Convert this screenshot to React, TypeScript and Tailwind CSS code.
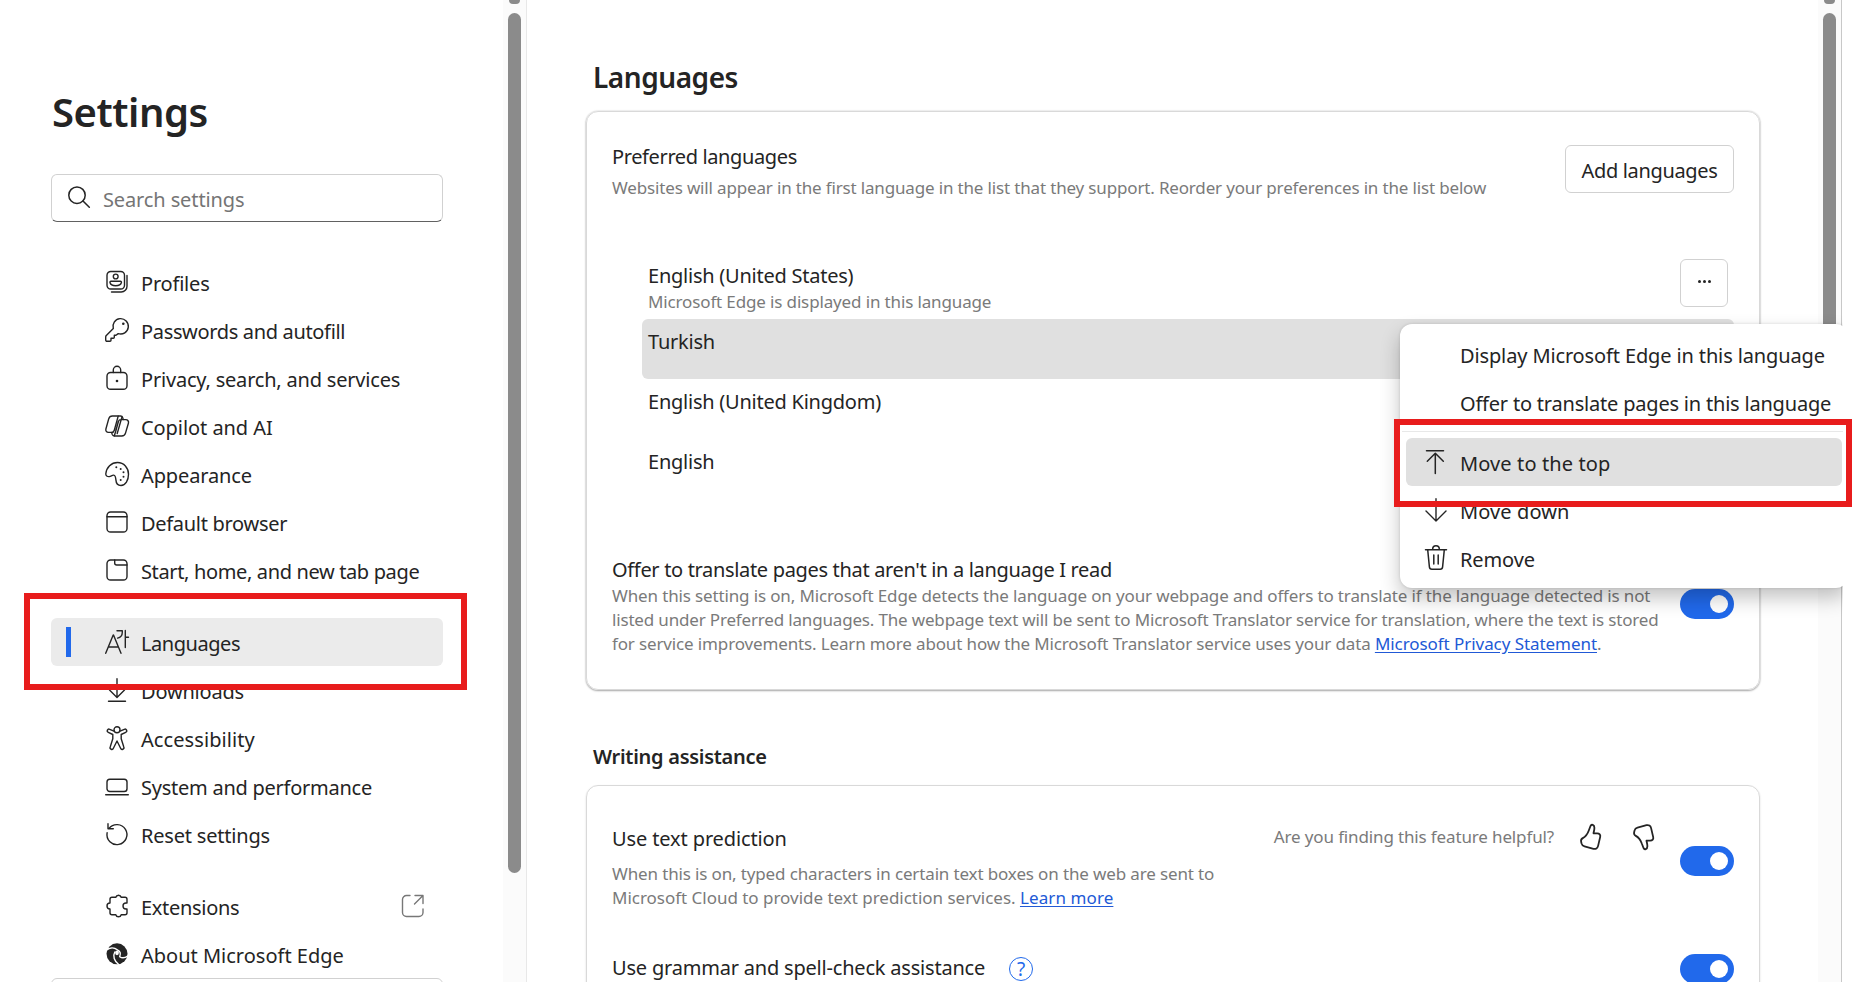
import type { ReactNode } from "react";
import clsx from "clsx";

type IconProps = { children: ReactNode; className?: string };

const Icon = ({ children, className }: IconProps) => (
  <svg
    viewBox="0 0 24 24"
    fill="none"
    stroke="currentColor"
    strokeWidth={1.4}
    strokeLinecap="round"
    strokeLinejoin="round"
    className={clsx("size-6 shrink-0 overflow-visible", className)}
  >
    {children}
  </svg>
);

const Dot = ({ x, y }: { x: number; y: number }) => (
  <circle cx={x} cy={y} r={1} fill="currentColor" stroke="none" />
);

const icons = {
  profiles: (
    <Icon>
      <rect x="2" y="1.5" width="17.5" height="17.5" rx="3.8" />
      <circle cx="10.7" cy="6.5" r="2.4" />
      <path d="M6 11.2h9.4c.8 0 1.2.6 1 1.3-.5 2-2.7 3.2-5.7 3.2s-5.200-1.200-5.700-3.200c-.2-.7.2-1.3 1-1.3Z" />
      <path d="M22 5.5v10.700c0 3.3-2.5 5.8-5.8 5.8H6.5" />
    </Icon>
  ),
  key: (
    <Icon>
      <path d="M13.2 15.600A7.700 7.700 0 1 0 8.300 10.600L1.300 17.600a2 2 0 0 0-.6 1.400V22a1.3 1.3 0 0 0 1.3 1.3H5a1 1 0 0 0 1-1V20.300H8.300a1 1 0 0 0 1-1V17.300H11Z" />
      <circle cx="18.3" cy="5.7" r="1.3" fill="currentColor" stroke="none" />
    </Icon>
  ),
  lock: (
    <Icon>
      <rect x="2" y="6.5" width="20" height="16.8" rx="3.6" />
      <path d="M8.3 6.500V4a3.7 3.7 0 0 1 7.400 0v2.500" />
      <circle cx="12" cy="15" r="1.3" fill="currentColor" stroke="none" />
    </Icon>
  ),
  copilot: (
    <Icon>
      <path d="M7.4 2h8.2c1 0 1.8.7 2.1 1.6l.6 2h2.500c1.9 0 3.2 1.8 2.6 3.6l-2.9 9.900c-.5 1.7-2 2.9-3.7 2.9H9.300c-1 0-1.8-.7-2.1-1.6l-.6-2H3.400C1.600 18.400.4 16.700.9 15L3.700 4.900C4.200 3.200 5.700 2 7.400 2Z" />
      <path d="M13.2 2.100 9.300 16.200c-.4 1.4-1.3 2.2-2.7 2.200M18.300 5.600h-2.500c-1.200 0-2 .7-2.400 1.900L10.500 18c-.4 1.3-.8 2.7-1.2 3.900M17 2.900 12.200 19.500" />
    </Icon>
  ),
  palette: (
    <Icon>
      <path d="M.8 11.800C1.400 5.500 6.300.5 12.500.5c6.400 0 11 5.200 11 11.800 0 6-3 11.200-7.500 11.200-3.500 0-4.900-2.500-5.100-5.600-.2-2.600-.4-4.600-2.200-4.800-1.600-.2-2.600 1.300-4.400 1.500-2 .2-3.700-1-3.500-2.800Z" />
      <Dot x={11.3} y={5.3} />
      <Dot x={15.7} y={7} />
      <Dot x={18.5} y={10.3} />
      <Dot x={18.5} y={14.7} />
      <Dot x={15.7} y={18} />
    </Icon>
  ),
  browser: (
    <Icon>
      <rect x="2" y="2" width="20" height="20" rx="3.6" />
      <path d="M2 6.700h20" />
    </Icon>
  ),
  tab: (
    <Icon>
      <rect x="2" y="2" width="20" height="20" rx="3.6" />
      <path d="M9.700 2v3c0 1.200.8 2 2 2H22" />
    </Icon>
  ),
  languages: (
    <Icon>
      <path d="M.7 23.300 8.200 5h.3L16 23.300M3.300 17h10M12 .8h5.300v1.400c0 3-1.500 5.100-4.700 5.900M20.300.5V17.500M20.300 7.200h3.200" />
    </Icon>
  ),
  download: (
    <Icon>
      <path d="M12 .7v18.600M4.500 12 12 19.500 19.500 12M3.500 23.300h17" />
    </Icon>
  ),
  accessibility: (
    <Icon>
      <circle cx="12" cy="3.8" r="3" />
      <path d="M9 5.200 4.700 3.300a1.7 1.7 0 0 0-1.400 3.100l4.500 2.100v4.300L5.200 21a1.7 1.7 0 0 0 3.2 1.300L12 15l3.600 7.300a1.7 1.7 0 0 0 3.2-1.300l-2.600-8.200V8.500l4.500-2.100a1.7 1.7 0 0 0-1.400-3.100L15 5.200" />
    </Icon>
  ),
  laptop: (
    <Icon>
      <rect x="2" y="5.3" width="20" height="12.2" rx="2.8" />
      <path d="M.7 20.700h22.600" />
    </Icon>
  ),
  reset: (
    <Icon>
      <path d="M2.100 10.800A10 10 0 1 0 4 6.500M3 1.700v5h5.300" />
    </Icon>
  ),
  puzzle: (
    <Icon>
      <path d="M10.800 3.300a2.800 2.800 0 0 1 5.400 0H20a2 2 0 0 1 2 2V9h-1a3 3 0 0 0 0 6h1v3.700a2 2 0 0 1-2 2h-3.800a2.800 2.800 0 0 1-5.400 0H7a2 2 0 0 1-2-2V15a3 3 0 0 1 0-6V5.300a2 2 0 0 1 2-2Z" />
    </Icon>
  ),
  edge: (
    <Icon>
      <circle cx="12" cy="11.8" r="10.5" fill="currentColor" stroke="none" />
      <path
        d="M1 8.600C4.500 5.400 9 5.300 12.300 7.800M9.800 10c-2.300 4-.6 9.300 3.900 12.500M12.300 7.800c3 1.200 3.700 3.800 2.400 6.900 2.300 1.600 5.300 1.200 8-.6"
        stroke="#fff"
        strokeWidth={1.4}
      />
      <ellipse cx="12" cy="10.8" rx="1.9" ry="2.4" fill="#fff" stroke="none" />
    </Icon>
  ),
};

type NavItem = {
  label: string;
  icon: ReactNode;
  tracking: string;
  active?: boolean;
  external?: boolean;
  spaced?: boolean;
};

const navItems: NavItem[] = [
  { label: "Profiles", icon: icons.profiles, tracking: "tracking-[-0.2px]" },
  { label: "Passwords and autofill", icon: icons.key, tracking: "tracking-[-0.34px]" },
  { label: "Privacy, search, and services", icon: icons.lock, tracking: "tracking-[-0.2px]" },
  { label: "Copilot and AI", icon: icons.copilot, tracking: "tracking-[-0.06px]" },
  { label: "Appearance", icon: icons.palette, tracking: "tracking-[-0.12px]" },
  { label: "Default browser", icon: icons.browser, tracking: "tracking-[-0.3px]" },
  { label: "Start, home, and new tab page", icon: icons.tab, tracking: "tracking-[-0.36px]" },
  { label: "Languages", icon: icons.languages, tracking: "tracking-[-0.45px]", active: true, spaced: true },
  { label: "Downloads", icon: icons.download, tracking: "tracking-[-0.2px]" },
  { label: "Accessibility", icon: icons.accessibility, tracking: "tracking-[0.08px]" },
  { label: "System and performance", icon: icons.laptop, tracking: "tracking-[-0.25px]" },
  { label: "Reset settings", icon: icons.reset, tracking: "tracking-[-0.2px]" },
  { label: "Extensions", icon: icons.puzzle, tracking: "tracking-[-0.3px]", external: true, spaced: true },
  { label: "About Microsoft Edge", icon: icons.edge, tracking: "tracking-normal" },
];

function Sidebar() {
  return (
    <aside className="w-[503px] shrink-0 pl-[51px] pt-[88px]">
      <h1 className="pl-px text-[40px] leading-[48px] font-semibold tracking-[-0.45px]">Settings</h1>

      <div className="mt-[38px] flex h-12 w-[392px] items-center rounded-md border border-[#d1d1d1] border-b-[#616161] pl-3.5">
        <Icon className="mb-0.5">
          <circle cx="11" cy="10.2" r="8.2" strokeWidth={1.5} />
          <path d="m17 16 6.300 6.300" strokeWidth={1.5} />
        </Icon>
        <span className="mt-1 ml-[13px] text-xl tracking-[-0.12px] text-[#757575]">Search settings</span>
      </div>

      <nav className="mt-9 w-[392px]">
        {navItems.map((item) => (
          <div
            key={item.label}
            className={clsx(
              "flex h-12 items-center rounded-md pr-[18px]",
              item.spaced && "mt-6",
              item.active && "bg-[#ebebeb]"
            )}
          >
            <span className={clsx("ml-[15px] h-[30px] w-[5px]", item.active && "bg-[#2169eb]")} />
            <span className="ml-[34px]">{item.icon}</span>
            <span className={clsx("mt-1 ml-3 text-xl whitespace-nowrap", item.tracking)}>{item.label}</span>
            {item.external && (
              <Icon className="ml-auto text-[#777]">
                <path d="M9 1.500H5.500a4 4 0 0 0-4 4v13a4 4 0 0 0 4 4H18a4 4 0 0 0 4-4V15M14 1.500h8v8M22 1.500 13.500 10" />
              </Icon>
            )}
          </div>
        ))}
      </nav>
      <div className="h-12 w-[392px] rounded-md border border-[#d1d1d1]" />
    </aside>
  );
}

function Scrollbar({ thumb, className }: { thumb: string; className: string }) {
  return (
    <div className={clsx("flex w-6 shrink-0 flex-col items-center border-r bg-[#fbfbfb]", className)}>
      <div className="h-1 w-[11px] rounded-b-sm bg-[#8b8b8b]" />
      <div className={clsx("mt-[9px] w-[13px] rounded-full bg-[#8b8b8b]", thumb)} />
    </div>
  );
}

const Toggle = ({ className }: { className?: string }) => (
  <div className={clsx("flex h-[30px] w-[54px] shrink-0 items-center justify-end rounded-full bg-[#2169eb] pr-1.5", className)}>
    <span className="size-[18px] rounded-full bg-white" />
  </div>
);

const card = "-ml-px w-[1174px] rounded-xl border border-[#d9d9d9] pr-[25px] pl-[25px]";
const hint = "text-[17px] leading-6 tracking-[-0.14px] text-[#7a7a7a]";
const link = "text-[#2159d6] underline underline-offset-2 tracking-[-0.06px]";

const languages = [
  { name: "English (United States)", note: "Microsoft Edge is displayed in this language" },
  { name: "Turkish", selected: true },
  { name: "English (United Kingdom)" },
  { name: "English" },
];

function LanguagesCard() {
  return (
    <section
      className={clsx(card, "mt-4 h-[579px] pt-[31px] shadow-[0_0_2px_rgba(0,0,0,0.2),0_1px_2px_rgba(0,0,0,0.3)]")}
    >
      <div className="flex h-[116px] items-start justify-between">
        <div>
          <h3 className="text-xl leading-7 tracking-[-0.38px]">Preferred languages</h3>
          <p className={clsx(hint, "mt-[5px] whitespace-nowrap tracking-[-0.16px]")}>
            Websites will appear in the first language in the list that they support. Reorder your preferences in the
            list below
          </p>
        </div>
        <button className="mt-0.5 h-12 w-[169px] rounded-md border border-[#d1d1d1] pt-[3px] text-xl tracking-[-0.34px]">
          Add languages
        </button>
      </div>

      <ul className="pl-[30px]">
        {languages.map((lang) => (
          <li
            key={lang.name}
            className={clsx(
              "flex h-[60px] items-start justify-between rounded-md pr-1.5 pl-1.5",
              lang.note ? "pt-[3px]" : "pt-[9px]",
              lang.selected && "bg-[#e0e0e0]"
            )}
          >
            <div>
              <div className="text-xl leading-7 tracking-[-0.24px]">{lang.name}</div>
              {lang.note && <div className={clsx(hint, "tracking-[-0.1px]")}>{lang.note}</div>}
            </div>
            {lang.note && (
              <button className="-mt-[3px] flex size-12 items-center justify-center gap-0.5 rounded-md border border-[#d1d1d1] pb-1">
                <span className="size-[3px] rounded-full bg-[#242424]" />
                <span className="size-[3px] rounded-full bg-[#242424]" />
                <span className="size-[3px] rounded-full bg-[#242424]" />
              </button>
            )}
          </li>
        ))}
      </ul>

      <div className="mt-[57px] flex items-start justify-between">
        <div>
          <h3 className="text-xl leading-7 tracking-[-0.33px]">Offer to translate pages that aren't in a language I read</h3>
          <p className={clsx(hint, "whitespace-nowrap")}>
            When this setting is on, Microsoft Edge detects the language on your webpage and offers to translate if the
            language detected is not
            <br />
            <span className="tracking-[-0.17px]">
              listed under Preferred languages. The webpage text will be sent to Microsoft Translator service for
              translation, where the text is stored
            </span>
            <br />
            for service improvements. Learn more about how the Microsoft Translator service uses your data{" "}
            <a className={link}>Microsoft Privacy Statement</a>.
          </p>
        </div>
        <Toggle className="mt-[33px]" />
      </div>
    </section>
  );
}

function Thumb({ className }: { className?: string }) {
  return (
    <svg
      viewBox="0 0 24 28"
      fill="none"
      stroke="#242424"
      strokeWidth={1.8}
      strokeLinejoin="round"
      className={clsx("h-7 w-6", className)}
    >
      <path d="M12.600 2.800c.7-1.700 3.800-1.300 3.800 1.900 0 2.300-.5 3.600-.9 5.600h3.700c2.200 0 3.500 1.600 3 3.600l-2.100 9c-.5 2.200-2.400 3.500-4.600 2.900l-9-2.400c-1.600-.4-2.600-1.400-3-3l-.4-1.900c-.3-1.500.4-2.700 1.700-3.400 3.500-1.800 4.800-4.200 6-7.600Z" />
    </svg>
  );
}

function WritingCard() {
  return (
    <section className={clsx(card, "mt-3.5 h-[320px] pt-[39px] shadow-[0_1px_2px_rgba(0,0,0,0.15)]")}>
      <div className="flex h-[129px] items-start">
        <div>
          <h3 className="text-xl leading-7 tracking-[-0.12px]">Use text prediction</h3>
          <p className={clsx(hint, "mt-[9px] whitespace-nowrap tracking-[-0.12px]")}>
            When this is on, typed characters in certain text boxes on the web are sent to
            <br />
            <span className="tracking-[-0.02px]">Microsoft Cloud to provide text prediction services. </span>
            <a className={clsx(link, "tracking-[0.1px]")}>Learn more</a>
          </p>
        </div>
        <div className="ml-auto flex items-start">
          <span className={hint}>Are you finding this feature helpful?</span>
          <Thumb className="-mt-0.5 ml-6" />
          <Thumb className="-mt-0.5 ml-[29px] -scale-y-100" />
        </div>
        <Toggle className="mt-[21px] ml-[25px]" />
      </div>

      <div className="flex items-start">
        <h3 className="text-xl leading-7 tracking-[-0.2px]">Use grammar and spell-check assistance</h3>
        <span className="mt-[3px] ml-6 flex size-6 items-center justify-center rounded-full border-[1.5px] border-[#2169eb] text-[19px] leading-none text-[#2169eb]">
          ?
        </span>
        <Toggle className="ml-auto" />
      </div>
    </section>
  );
}

const menuItems = [
  { label: "Display Microsoft Edge in this language", tracking: "tracking-[-0.13px]" },
  { label: "Offer to translate pages in this language", tracking: "tracking-[-0.2px]" },
  {
    label: "Move to the top",
    hovered: true,
    tracking: "tracking-[0.12px]",
    icon: (
      <Icon>
        <path d="M2.500.7h17M11.300 23.500V3.500M3.300 11.200l8-8 8 8" strokeWidth={1.5} />
      </Icon>
    ),
  },
  {
    label: "Move down",
    tracking: "tracking-[0.1px]",
    icon: (
      <Icon>
        <path d="M12 .7v22.300M2 13l10 10 10-10" />
      </Icon>
    ),
  },
  {
    label: "Remove",
    tracking: "tracking-[-0.1px]",
    icon: (
      <Icon>
        <path
          d="M1.500 3.700h21M3.700 3.700l1.700 17.200c.1 1.400 1.100 2.300 2.400 2.300h8.400c1.300 0 2.300-.9 2.400-2.300l1.700-17.200M8.700 3.700V3a3.300 3.300 0 0 1 6.600 0v.7M9.800 9v9M14.200 9v9"
          strokeWidth={1.5}
        />
      </Icon>
    ),
  },
];

function ContextMenu() {
  return (
    <div className="absolute top-[324px] left-[1400px] w-[448px] rounded-xl bg-white p-1.5 shadow-[0_10px_20px_rgba(0,0,0,0.24),0_0_3px_rgba(0,0,0,0.14)]">
      {menuItems.map((item) => (
        <div key={item.label}>
          {item.hovered && <div className="-mx-1 mt-[5px] mb-1.5 h-px bg-[#e8e8e8]" />}
          <div className={clsx("flex h-12 items-center rounded-md pl-[18px]", item.hovered && "bg-[#e0e0e0]")}>
            <span className="w-6">{item.icon}</span>
            <span className={clsx("mt-1 ml-3 text-xl whitespace-nowrap", item.tracking)}>{item.label}</span>
          </div>
        </div>
      ))}
    </div>
  );
}

export default function App() {
  return (
    <div className="relative h-[982px] w-[1853px] overflow-hidden bg-white font-['Noto_Sans','Open_Sans',sans-serif] text-[#242424]">
      <div className="relative flex h-full w-[1843px] overflow-hidden">
        <Sidebar />
        <Scrollbar thumb="h-[860px]" className="border-[#e8e8e8]" />
        <main className="w-[1291px] shrink-0 pt-[59px] pl-[60px]">
          <div className="w-[1173px]">
            <h2 className="pl-1.5 text-[28px] leading-9 font-semibold tracking-[-0.45px]">Languages</h2>
            <LanguagesCard />
            <h2 className="mt-[53px] pl-1.5 text-xl leading-7 font-semibold tracking-[-0.28px]">Writing assistance</h2>
            <WritingCard />
          </div>
        </main>
        <Scrollbar thumb="h-[420px]" className="border-[#c8c8c8]" />
        <ContextMenu />
      </div>

      {/* callout frames */}
      <div className="absolute top-[593px] left-6 h-[97px] w-[443px] border-6 border-[#e81c1c]" />
      <div className="absolute top-[419px] left-[1394px] h-[88px] w-[458px] border-6 border-[#e81c1c]" />
    </div>
  );
}
